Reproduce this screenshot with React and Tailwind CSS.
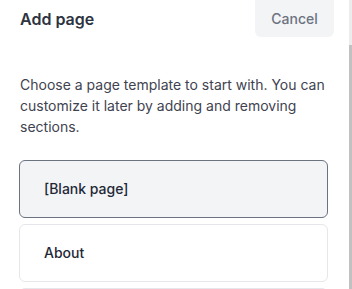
import React from "react";

const templates = ["[Blank page]", "About", ""];

export default function App() {
  return (
    <div className="flex h-[289px] w-[352px] overflow-hidden bg-white font-['Inter',sans-serif]">
      <div className="flex-1 min-w-0">
        {/* Header */}
        <div className="flex h-[37px] items-center justify-between pl-5 pr-[15px]">
          <h2 className="text-base font-semibold text-[#2d3340]">Add page</h2>
          <button className="flex h-[37px] w-[79px] items-center justify-center rounded-b-md bg-[#f3f4f6] text-sm font-medium text-[#6b7280]">
            Cancel
          </button>
        </div>

        <p className="mt-[37px] pl-5 pr-6 text-sm leading-[21px] text-[#3f4350]">
          Choose a page template to start with. You can customize it later by adding and removing sections.
        </p>

        {/* Templates */}
        <div className="mt-[23px] flex w-[309px] flex-col gap-1.5 ml-[19px]">
          {templates.map((name, i) => (
            <button
              key={i}
              className={`flex h-[58px] shrink-0 items-center rounded-md border px-6 text-left text-sm font-medium text-[#1f2937] ${
                i === 0 ? "border-[#6b7280] bg-[#f3f4f6]" : "border-[#e5e7eb] bg-white"
              }`}
            >
              {name}
            </button>
          ))}
        </div>
      </div>

      {/* Scrollbar */}
      <div className="flex w-[3px] flex-col">
        <div className="h-[45px] bg-[#ececec]" />
        <div className="flex-1 bg-[#c1c1c1]" />
      </div>
    </div>
  );
}
